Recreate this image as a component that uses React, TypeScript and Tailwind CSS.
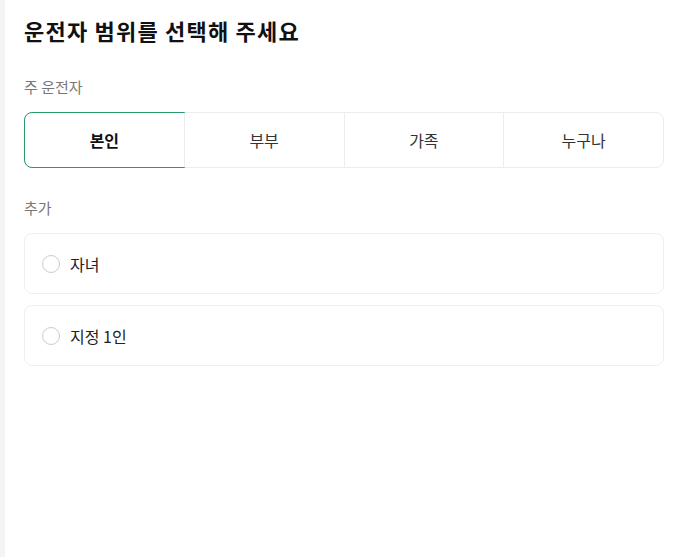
import { useState } from "react";

const font = { fontFamily: '"Noto Sans CJK KR", "Noto Sans", sans-serif' };

export default function App() {
  const [main, setMain] = useState("본인");
  const [extra, setExtra] = useState<string | null>(null);

  const options = ["본인", "부부", "가족", "누구나"];
  const extras = ["자녀", "지정 1인"];

  return (
    <div className="flex min-h-screen bg-white" style={font}>
      <div className="w-[5px] shrink-0 bg-[#f4f4f4]" />
      <div className="flex-1 pl-[19px] pr-[21px] pt-[13px]">
        <h1 className="text-[22px] font-bold leading-[34px] tracking-[1.2px] text-[#111]">운전자 범위를 선택해 주세요</h1>

        <p className="mt-[30px] text-[15px] leading-[20px] text-[#777]">주 운전자</p>
        <div className="mt-[15px] flex h-[56px] rounded-lg border border-[#ececec]">
          {options.map((o, i) => (
            <button
              key={o}
              onClick={() => setMain(o)}
              className={`relative flex flex-1 items-center justify-center text-[16px] ${
                i > 0 ? "border-l border-[#ececec]" : ""
              } ${main === o ? "font-bold text-[#111]" : "text-[#333]"}`}
            >
              {main === o && (
                <span
                  className={`absolute -inset-px border border-[#2a9a6a] ${
                    i === 0 ? "rounded-l-lg" : i === options.length - 1 ? "rounded-r-lg" : ""
                  }`}
                />
              )}
              {o}
            </button>
          ))}
        </div>

        <p className="mt-[30px] text-[15px] leading-[20px] text-[#777]">추가</p>
        <div className="mt-[15px] flex flex-col gap-[11px]">
          {extras.map((e) => (
            <button
              key={e}
              onClick={() => setExtra(extra === e ? null : e)}
              className="flex h-[61px] items-center gap-[10px] rounded-lg border border-[#eeeeee] px-[17px] text-left"
            >
              <span
                className={`h-[18px] w-[18px] rounded-full border ${
                  extra === e ? "border-[5px] border-[#2a9a6a]" : "border-[#cccccc]"
                }`}
              />
              <span className="text-[16px] text-[#222]">{e}</span>
            </button>
          ))}
        </div>
      </div>
    </div>
  );
}
